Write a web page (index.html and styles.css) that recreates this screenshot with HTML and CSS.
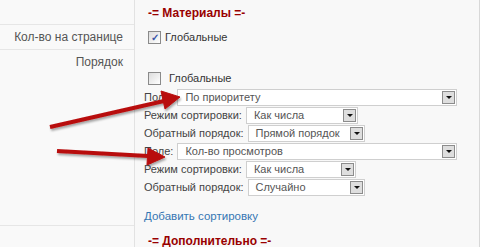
FILE: index.html
```html
<!DOCTYPE html>
<html lang="ru">
<head>
<meta charset="UTF-8">
<title>Сортировка материалов</title>
<link rel="stylesheet" href="styles.css">
</head>
<body>
<div class="panel">
  <!-- Left labels column -->
  <div class="labels">
    <div class="label-row head"></div>
    <div class="label-row">Кол-во на странице</div>
    <div class="label-row tall">Порядок</div>
    <div class="label-row"></div>
  </div>

  <!-- Settings column -->
  <div class="content">
    <div class="section-title">-= Материалы =-</div>
    <div class="check-line">
      <span class="checkbox checked">&#10003;</span>
      <span>Глобальные</span>
    </div>

    <div class="check-line second">
      <span class="checkbox"></span>
      <span>Глобальные</span>
    </div>

    <div class="field-line">
      <span>Поле:</span>
      <div class="select wide"><span>По приоритету</span><i class="drop"></i></div>
    </div>
    <div class="field-line">
      <span>Режим сортировки:</span>
      <div class="select mode"><span>Как числа</span><i class="drop"></i></div>
    </div>
    <div class="field-line">
      <span>Обратный порядок:</span>
      <div class="select order"><span>Прямой порядок</span><i class="drop"></i></div>
    </div>

    <div class="field-line">
      <span>Поле:</span>
      <div class="select wide"><span>Кол-во просмотров</span><i class="drop"></i></div>
    </div>
    <div class="field-line">
      <span>Режим сортировки:</span>
      <div class="select mode short"><span>Как числа</span><i class="drop"></i></div>
    </div>
    <div class="field-line">
      <span>Обратный порядок:</span>
      <div class="select order"><span>Случайно</span><i class="drop"></i></div>
    </div>

    <a href="#" class="add-link">Добавить сортировку</a>
    <div class="section-title last">-= Дополнительно =-</div>
  </div>
</div>

<!-- Red annotation arrows drawn over the form -->
<svg class="arrows" width="486" height="247" viewBox="0 0 486 247">
  <defs>
    <filter id="sh" x="-10%" y="-50%" width="120%" height="200%">
      <feDropShadow dx="1" dy="2" stdDeviation="1.2" flood-color="#000" flood-opacity="0.35"/>
    </filter>
  </defs>
  <g fill="#b80d0d" stroke="#b80d0d" filter="url(#sh)">
    <line x1="50" y1="127" x2="164" y2="101" stroke-width="4"/>
    <polygon points="180,97 161,91 165,109" stroke-width="1"/>
    <line x1="57" y1="151" x2="148" y2="156" stroke-width="4"/>
    <polygon points="165,157 148,148 147,165" stroke-width="1"/>
  </g>
</svg>
</body>
</html>
```

FILE: styles.css
```css
/* General */
body {
  margin: 0;
  background-color: #fff;
  font-family: Arial, "Liberation Sans", sans-serif;
  font-size: 11px;
  color: #444;
  overflow: hidden;
}
.panel {
  display: flex;
  width: 479px;
  height: 247px;
  border-right: 1px solid #d8d8d8;
  background-color: #f8f8f8;
}

/* Left column */
.labels {
  width: 134px;
  flex-shrink: 0;
  border-right: 1px solid #e2e2e2;
  background-color: #f9f9f9;
}
.label-row {
  border-bottom: 1px solid #e6e6e6;
  padding: 5px 11px 0 0;
  box-sizing: border-box;
  height: 25px;
  text-align: right;
  font-size: 12px;
  color: #555;
}
.label-row.tall {
  height: 176px;
}

/* Right column */
.content {
  flex-grow: 1;
  padding-left: 9px;
}
.section-title {
  margin: 6px 0 0 4px;
  height: 24px;
  font-family: "Liberation Sans", Arial, sans-serif;
  font-size: 12px;
  font-weight: bold;
  color: #990000;
}
.section-title.last {
  margin-top: 12px;
}
.check-line {
  display: flex;
  align-items: center;
  gap: 4px;
  margin-left: 4px;
  height: 14px;
  font-size: 11px;
  color: #333;
}
.check-line.second {
  margin-top: 27px;
  gap: 8px;
  margin-bottom: 3px;
}
.checkbox {
  width: 11px;
  height: 11px;
  border: 1px solid #8a8a8a;
  background: linear-gradient(135deg, #dcdcdc, #fff);
  display: flex;
  align-items: center;
  justify-content: center;
  font-size: 10px;
  font-weight: bold;
  color: #3b56a8;
}
.field-line {
  display: flex;
  align-items: center;
  gap: 4px;
  height: 18px;
  color: #444;
}
.select {
  display: flex;
  align-items: center;
  justify-content: space-between;
  box-sizing: border-box;
  height: 17px;
  border: 1px solid #cfcfcf;
  background-color: #fff;
  padding-left: 7px;
  color: #555;
}
.select.wide {
  width: 280px;
}
.select.mode {
  width: 112px;
}
.select.mode.short {
  width: 110px;
}
.select.order {
  width: 117px;
}
.drop {
  width: 13px;
  height: 13px;
  margin-right: 1px;
  box-sizing: border-box;
  border: 1px solid #8c8c8c;
  background-color: #dedede;
  position: relative;
}
.drop::after {
  content: "";
  position: absolute;
  left: 3px;
  top: 4px;
  border-left: 3px solid transparent;
  border-right: 3px solid transparent;
  border-top: 3px solid #111;
}
.add-link {
  display: block;
  margin-top: 14px;
  color: #3576b3;
  text-decoration: none;
  font-size: 11.5px;
}

/* Annotation overlay */
.arrows {
  position: absolute;
  left: 0;
  top: 0;
  pointer-events: none;
}
```
